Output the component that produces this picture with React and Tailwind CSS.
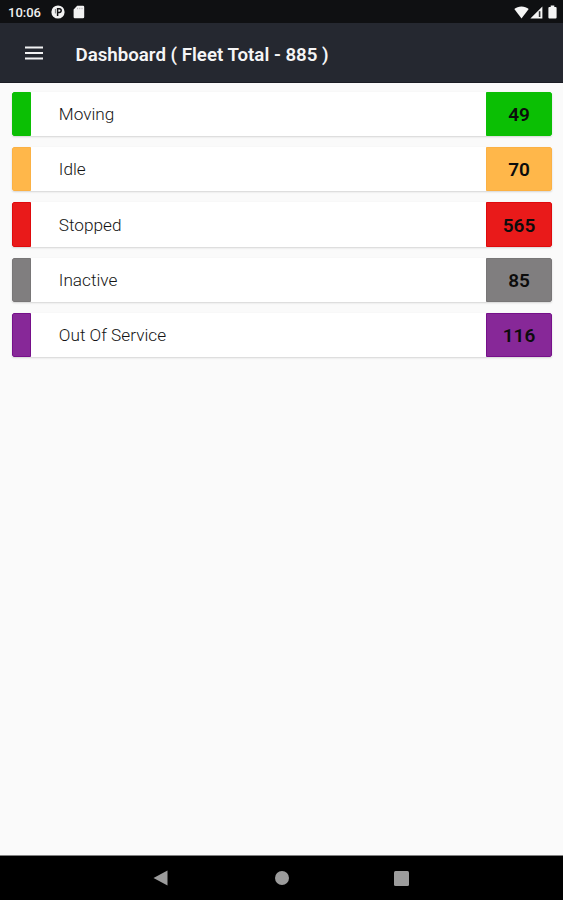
import React from 'react';

const statuses = [
  { label: 'Moving', count: 49, color: 'bg-[#0bbf04]', border: 'border-[#0bbf04]' },
  { label: 'Idle', count: 70, color: 'bg-[#ffb74a]', border: 'border-[#fbb144]' },
  { label: 'Stopped', count: 565, color: 'bg-[#e91a1a]', border: 'border-[#df0a0c]' },
  { label: 'Inactive', count: 85, color: 'bg-[#807e7f]', border: 'border-[#787677]' },
  { label: 'Out Of Service', count: 116, color: 'bg-[#872898]', border: 'border-[#76108a]' },
];

const StatusBar = () => (
  <div className="h-[23px] shrink-0 bg-[#0f1012] flex items-center justify-between pl-2 pr-[6px]">
    <div className="flex items-center">
      <span className="w-[43px] text-[13px] leading-none font-medium text-[#f0f0f0] pt-px">10:06</span>
      <svg width="14" height="14" viewBox="0 0 14 14" className="mt-px">
        <circle cx="7" cy="7" r="6.6" fill="#f2f2f2" />
        <path d="M4.4 4V8.4" stroke="#77787a" strokeWidth="1" />
        <path d="M6.6 11V3.8H8.4a1.8 1.8 0 0 1 0 3.6H6.9" fill="none" stroke="#0f1012" strokeWidth="1.5" />
      </svg>
      <svg width="12" height="14" viewBox="0 0 12 14" className="ml-[8px] mt-px">
        <path d="M4.2 .8H10a1.2 1.2 0 0 1 1.2 1.2V12a1.2 1.2 0 0 1-1.2 1.2H1.8A1.2 1.2 0 0 1 .6 12V4.4z" fill="#f2f2f2" />
        <path d="M4.6 2.8v1.4M6.8 2.8v1.4M9 2.8v1.4" stroke="#a0a0a2" strokeWidth=".8" />
      </svg>
    </div>
    <div className="flex items-center">
      <svg width="15" height="13" viewBox="0 0 15 13" className="mt-px">
        <path d="M7.5 12.4L.3 3.1C2.2 1.5 4.7.5 7.5.5s5.3 1 7.2 2.6z" fill="#f5f5f5" />
      </svg>
      <svg width="13" height="13" viewBox="0 0 13 13" className="ml-[1px] mt-px">
        <path d="M12.4 .4V12.4H.4z" fill="#f5f5f5" />
        <path d="M9.6 5.2V11" stroke="#303133" strokeWidth="1.6" />
      </svg>
      <svg width="9" height="14" viewBox="0 0 9 14" className="ml-[5px]">
        <path d="M2.7 .6h3.6V2H7.6a1 1 0 0 1 1 1V12.4a1 1 0 0 1-1 1H1.4a1 1 0 0 1-1-1V3a1 1 0 0 1 1-1H2.7z" fill="#f5f5f5" />
      </svg>
    </div>
  </div>
);

const Header = () => (
  <header className="h-[60px] shrink-0 bg-[#252830] border-b border-[#1b1c25] flex items-center pl-[25px]">
    <button type="button" aria-label="Menu">
      <svg width="18" height="14" viewBox="0 0 18 14" className="block">
        <path d="M0 1.5H18M0 7H18M0 12.5H18" stroke="#f2f2f3" strokeWidth="2" />
      </svg>
    </button>
    <h1 className="ml-[32.5px] pt-[4px] text-[18.7px] leading-6 font-semibold text-[#f5f5f6] whitespace-nowrap">
      Dashboard ( Fleet Total - 885 )
    </h1>
  </header>
);

const StatusRow = ({ label, count, color, border }) => (
  <div className="h-[44.5px] flex bg-white rounded-[2px] overflow-hidden shadow-[0_1px_2px_rgba(0,0,0,0.15)]">
    <div className={`w-[19px] border rounded-l-[2px] ${color} ${border}`} />
    <div className="flex-1 flex items-center pl-[28.3px] pt-[2px] text-[17.2px] font-light text-[#141414]">{label}</div>
    <div className={`w-[66px] border rounded-r-[2px] flex items-center justify-center pt-[3px] text-[19px] font-semibold text-[#0c0c0c] ${color} ${border}`}>
      {count}
    </div>
  </div>
);

const NavBar = () => (
  <nav className="h-[45px] shrink-0 bg-black border-t border-[#808080] flex items-center pl-[153px]">
    <svg width="15" height="16" viewBox="0 0 15 16">
      <path d="M14.5 .4V15.6L.5 8z" fill="#9c9c9c" />
    </svg>
    <span className="ml-[106.5px] size-[14px] rounded-full bg-[#9c9c9c]" />
    <span className="ml-[105.5px] size-[15px] rounded-[1.5px] bg-[#9c9c9c]" />
  </nav>
);

const App = () => (
  <div className="h-screen flex flex-col bg-[#fafafa] font-['Roboto',sans-serif]">
    <StatusBar />
    <Header />
    <main className="flex-1 flex flex-col gap-[10.8px] pt-[8.7px] pl-[11.5px] pr-[11px]">
      {statuses.map((s) => (
        <StatusRow key={s.label} {...s} />
      ))}
    </main>
    <NavBar />
  </div>
);

export default App;
